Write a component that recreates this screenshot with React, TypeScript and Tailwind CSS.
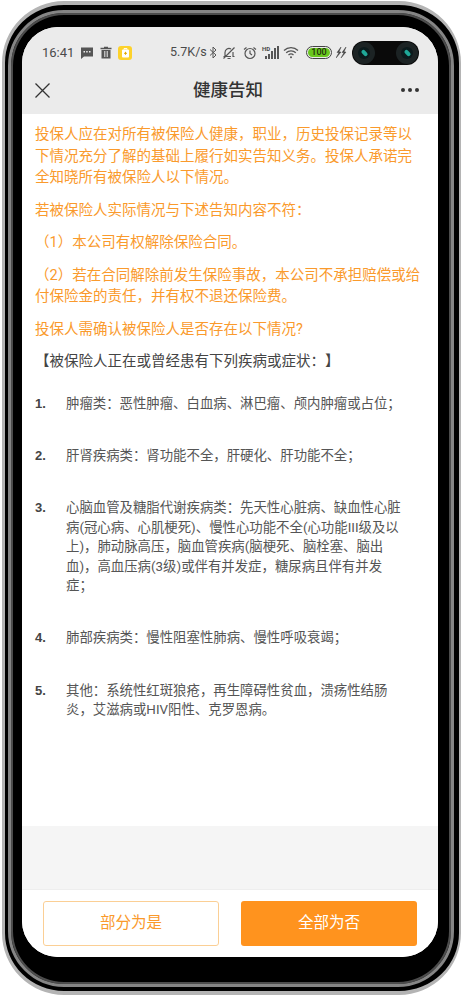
const cjk = "font-['Roboto','Noto_Sans_CJK_SC',sans-serif]";

const intro = [
  "投保人应在对所有被保险人健康，职业，历史投保记录等以下情况充分了解的基础上履行如实告知义务。投保人承诺完全知晓所有被保险人以下情况。",
  "若被保险人实际情况与下述告知内容不符：",
  "（1）本公司有权解除保险合同。",
  "（2）若在合同解除前发生保险事故，本公司不承担赔偿或给付保险金的责任，并有权不退还保险费。",
  "投保人需确认被保险人是否存在以下情况?",
];

const items = [
  "肿瘤类：恶性肿瘤、白血病、淋巴瘤、颅内肿瘤或占位；",
  "肝肾疾病类：肾功能不全，肝硬化、肝功能不全；",
  "心脑血管及糖脂代谢疾病类：先天性心脏病、缺血性心脏病(冠心病、心肌梗死)、慢性心功能不全(心功能III级及以上)，肺动脉高压，脑血管疾病(脑梗死、脑栓塞、脑出血)，高血压病(3级)或伴有并发症，糖尿病且伴有并发症；",
  "肺部疾病类：慢性阻塞性肺病、慢性呼吸衰竭；",
  "其他：系统性红斑狼疮，再生障碍性贫血，溃疡性结肠炎，艾滋病或HIV阳性、克罗恩病。",
];

function Lens() {
  return (
    <div className="w-[22px] h-[22px] rounded-full bg-[#1c2324] flex items-center justify-center">
      <div className="w-[12px] h-[12px] rounded-full bg-[#0b1a1c] flex items-center justify-center">
        <div className="w-[7px] h-[4px] rounded-full bg-[#1fa898] rotate-45" />
      </div>
    </div>
  );
}

function StatusBar() {
  return (
    <div className="h-[47px] pl-[20px] pr-[19px] pt-[4px] flex items-center text-[#4a4a4a]">
      <span className="w-[32px] text-[13px] font-['Roboto',sans-serif]">16:41</span>
      {/* message */}
      <svg className="ml-[6px]" width="14" height="14" viewBox="0 0 14 14" fill="#555">
        <path d="M1 1.500h12v9H4l-3 2.500z" />
        <rect x="3.500" y="5" width="1.500" height="1.500" fill="#ebebeb" />
        <rect x="6.200" y="5" width="1.500" height="1.500" fill="#ebebeb" />
        <rect x="9" y="5" width="1.500" height="1.500" fill="#ebebeb" />
      </svg>
      {/* trash */}
      <svg className="ml-[6px]" width="12" height="13" viewBox="0 0 12 13" fill="#555">
        <path d="M4 .8h4v1h3.500v1.400H.5V1.800H4z" />
        <path d="M1.500 4h9v8.500h-9z" />
        <rect x="4.300" y="5" width="1" height="6" fill="#ebebeb" />
        <rect x="6.700" y="5" width="1" height="6" fill="#ebebeb" />
      </svg>
      {/* yellow app */}
      <div className="ml-[6px] w-[14px] h-[14px] rounded-[3px] bg-[#fdd22b] flex items-center justify-center">
        <svg width="9" height="10" viewBox="0 0 9 10">
          <path d="M3 1.500V.6h3v.9" stroke="#fff" fill="none" />
          <rect x="1" y="1.500" width="7" height="8" rx="1" fill="#fff" />
          <path d="M4.500 3.800v3M3 5.300h3" stroke="#e2a900" />
        </svg>
      </div>
      <span className="ml-[38px] w-[36px] whitespace-nowrap text-[12.5px] font-['Roboto',sans-serif]">5.7K/s</span>
      {/* bluetooth */}
      <svg className="ml-[3px]" width="8" height="13" viewBox="0 0 8 13" fill="none" stroke="#555">
        <path d="M1 3.500l6 5.500-3 3V1l3 3-6 5.500" />
      </svg>
      {/* muted bell */}
      <svg className="ml-[5px]" width="14" height="14" viewBox="0 0 14 14" fill="none" stroke="#555" strokeWidth="1.200">
        <path d="M3 10.500V6.500a4 4 0 0 1 6-3.500M11 6v4.500h1.500M1.500 10.500H9M5.500 12.500h3M1.500 12.500l11-11" />
      </svg>
      {/* alarm */}
      <svg className="ml-[7px]" width="14" height="14" viewBox="0 0 14 14" fill="none" stroke="#555" strokeWidth="1.200">
        <circle cx="7" cy="7.500" r="5" />
        <path d="M7 4.500v3l2 1.500M1 3.500l2.500-2M13 3.500l-2.500-2" />
      </svg>
      {/* HD signal */}
      <div className="relative ml-[5px] w-[17px] h-[13px] flex items-end gap-[1px] justify-end">
        <span className="absolute left-0 top-[-1px] text-[6px] leading-[7px] font-bold font-['Roboto',sans-serif]">HD</span>
        <div className="w-[2px] h-[3px] bg-[#555]" />
        <div className="w-[2px] h-[5px] bg-[#555]" />
        <div className="w-[2px] h-[8px] bg-[#555]" />
        <div className="w-[2px] h-[11px] bg-[#555]" />
        <div className="w-[2px] h-[13px] bg-[#555]" />
      </div>
      {/* wifi */}
      <svg className="ml-[4px]" width="17" height="13" viewBox="0 0 17 13" fill="none" stroke="#555" strokeWidth="1.300">
        <path d="M1 4.500a10 10 0 0 1 14 0M3.200 6.800a7 7 0 0 1 9.600 0M5.500 9a3.800 3.800 0 0 1 5 0" />
        <circle cx="8" cy="11.300" r="1" fill="#555" stroke="none" />
      </svg>
      {/* battery */}
      <div className="ml-[6px] w-[26px] h-[13px] rounded-full border border-[#444] p-[1px] flex">
        <div className="flex-1 rounded-full bg-[#6ac81e] flex items-center justify-center text-[9px] leading-none font-medium font-['Roboto',sans-serif] text-[#22300f]">
          100
        </div>
      </div>
      {/* charging */}
      <svg className="ml-[4px]" width="11" height="11" viewBox="0 0 11 11" fill="#444" stroke="#444" strokeWidth="0.500">
        <path d="M5 0L1 5.500h2L0 11l5-6H3zM10 0L6 5.500h2L5 11l5-6H8z" />
      </svg>
      {/* camera cutout */}
      <div className="ml-[5px] w-[67px] h-[24px] rounded-full bg-[#0a0a0a] flex items-center justify-between px-px">
        <Lens />
        <Lens />
      </div>
    </div>
  );
}

export default function App() {
  return (
    <div className={`w-[466px] h-[997px] bg-white pl-[2px] pt-[1px] [text-spacing-trim:space-all] ${cjk}`}>
      {/* phone shell */}
      <div className="w-[459px] h-[994px] rounded-[62px] bg-black border-t-[4px] border-l-[3px] border-r-[2px] border-b-[4px] border-[#b4b4b4] pl-[3px] pr-[5px] pt-[5px] pb-[4px] flex">
        <div className="flex-1 rounded-[56px] border-[3px] border-[#858585] shadow-[inset_0_0_0_2px_#4c4c4c] pl-[11px] pr-[13px] pt-[14px] pb-[27px] flex">
          <div className="flex-1 rounded-[36px] bg-white overflow-hidden flex flex-col">
            <div className="bg-[#ebebeb] h-[87px] shrink-0">
              <StatusBar />
              <div className="h-[40px] pl-[13px] pr-[19px] pb-[8px] flex items-center justify-between">
                <svg width="15" height="15" viewBox="0 0 15 15" fill="none" stroke="#333" strokeWidth="1.300">
                  <path d="M.5.5l14 14M14.500.5l-14 14" />
                </svg>
                <span className="text-[17.5px] font-medium text-[#333] ml-[5px]">健康告知</span>
                <div className="flex gap-[3px]">
                  <div className="w-[4px] h-[4px] rounded-full bg-[#333]" />
                  <div className="w-[4px] h-[4px] rounded-full bg-[#333]" />
                  <div className="w-[4px] h-[4px] rounded-full bg-[#333]" />
                </div>
              </div>
            </div>

            <div className="h-[712px] shrink-0 pl-[13px] pr-[15px] pt-[10px] overflow-hidden">
              {intro.map((text) => (
                <p key={text} className="text-[14.5px] leading-[21.5px] text-[#fa9a2c] mb-[11px]">
                  {text}
                </p>
              ))}
              <p className="text-[14.5px] leading-[21.5px] text-[#444] mb-[21px]">【被保险人正在或曾经患有下列疾病或症状：】</p>
              <div className="flex flex-col gap-[33px]">
                {items.map((text, i) => (
                  <div key={text} className="flex">
                    <span className="w-[31px] shrink-0 text-[13px] leading-[19.4px] font-bold text-[#444] font-['Liberation_Sans',sans-serif]">
                      {i + 1}.
                    </span>
                    <p className="flex-1 pr-[17px] text-[13.4px] leading-[19.4px] text-[#555]">{text}</p>
                  </div>
                ))}
              </div>
            </div>

            <div className="flex-1 bg-[#f5f5f5] border-b border-[#eeeeee]" />

            <div className="h-[67px] shrink-0 bg-white px-[21px] pt-[11px] flex gap-[22px]">
              <button className="w-[176px] h-[45px] rounded-[3px] border border-[#fbcf95] text-[15.5px] text-[#fa9a2c]">
                部分为是
              </button>
              <button className="w-[176px] h-[45px] rounded-[3px] bg-[#ff931e] text-[15.5px] text-white">全部为否</button>
            </div>
          </div>
        </div>
      </div>
    </div>
  );
}
